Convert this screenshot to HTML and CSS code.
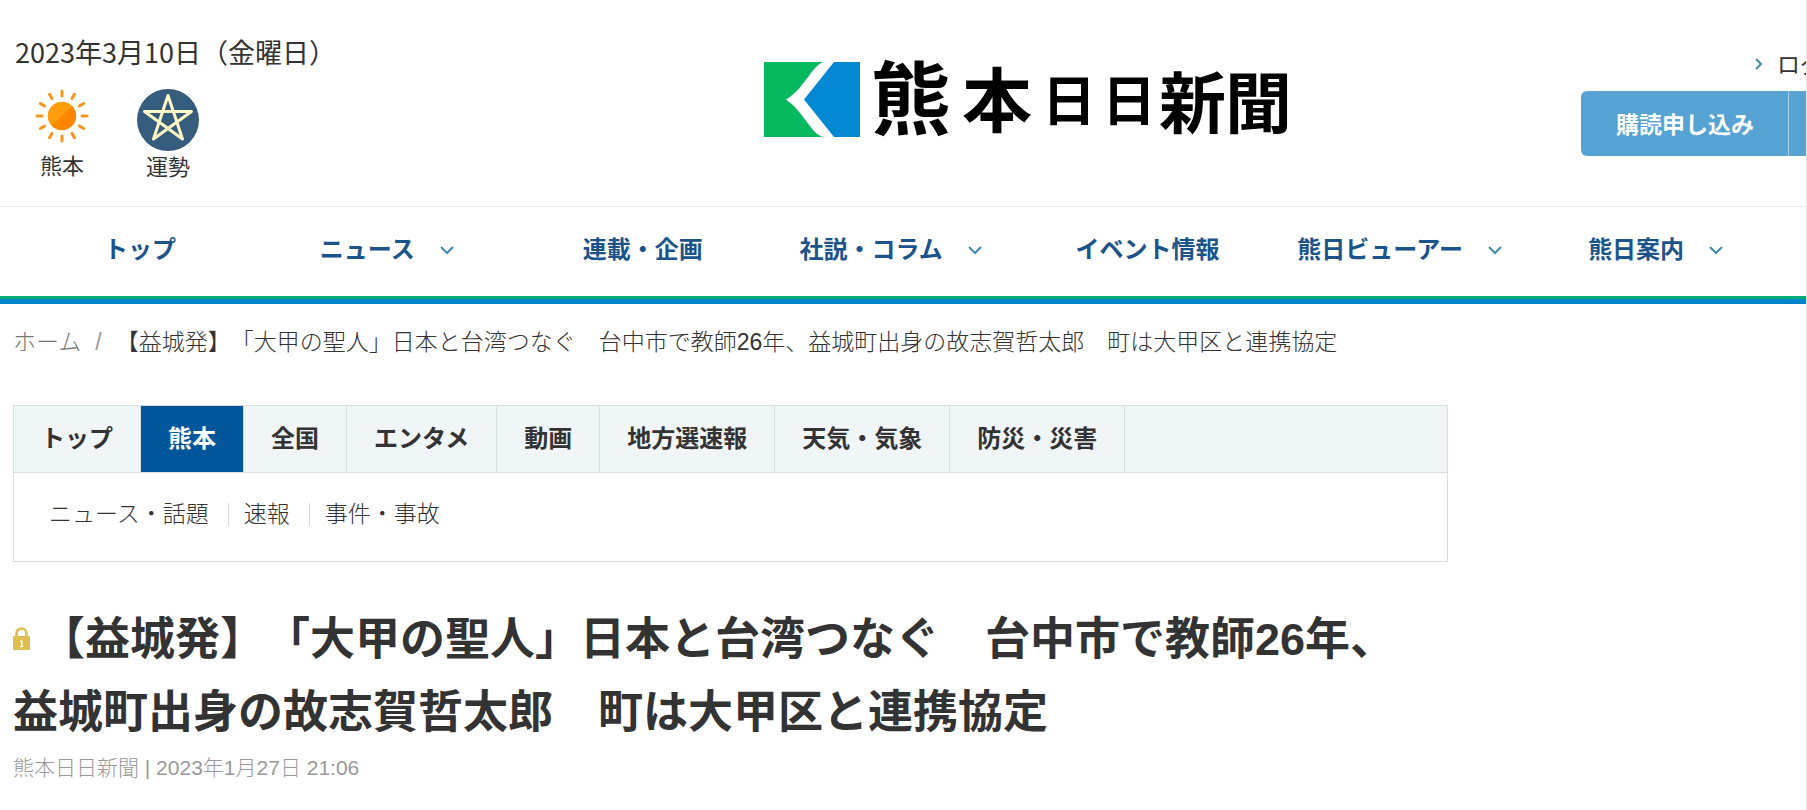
FILE: index.html
```html
<!DOCTYPE html>
<html lang="ja">
<head>
<meta charset="utf-8">
<title>熊本日日新聞</title>
<link rel="stylesheet" href="styles.css">
</head>
<body>
<div class="page">
  <header class="header">
    <div class="today">
      <p class="date">2023年3月10日（金曜日）</p>
      <ul class="shortcuts">
        <li><a class="shortcut" href="#">
          <svg class="sun" viewBox="0 0 54 54" aria-hidden="true">
            <g stroke="#f7941d" stroke-width="3" stroke-linecap="round">
              <path d="M27 2v5M27 47v5M2 27h5M47 27h5M14.500 5.300l2.500 4.300M37 44.400l2.500 4.300M5.300 14.500l4.300 2.500M44.400 37l4.300 2.500M5.300 39.500l4.300-2.500M44.400 17l4.300-2.500M14.500 48.700l2.500-4.300M37 9.600l2.500-4.300"/>
            </g>
            <circle cx="27" cy="27" r="14.300" fill="#ff9d0a"/>
            <path d="M37.100 16.900a14.300 14.300 0 0 1-20.200 20.200z" fill="#ff8400"/>
          </svg>
          <span>熊本</span></a></li>
        <li><a class="shortcut" href="#">
          <svg class="star" viewBox="0 0 62 62" aria-hidden="true">
            <circle cx="31" cy="31" r="31" fill="#355c7d"/>
            <path d="M31 6.500L45.500 50 7.500 22.500h47L16.500 50z" fill="none" stroke="#fdf8c4" stroke-width="3" stroke-linejoin="round"/>
          </svg>
          <span>運勢</span></a></li>
      </ul>
    </div>
    <a class="logo" href="#">
      <svg viewBox="0 0 530 90" role="img" aria-label="熊本日日新聞">
        <path d="M0 8h59C47 13 40 35 22 45.500C40 58 47 80 59 83H0z" fill="#06b95f"/>
        <path d="M70 8h26v75H70L40 45.500z" fill="#0389d3"/>
        <g class="logo-text">
          <text x="107" y="74" font-size="80">熊</text>
          <text x="198" y="73" font-size="70">本</text>
          <text x="278" y="67" font-size="54">日</text>
          <text x="338" y="67" font-size="54">日</text>
          <text x="395" y="74" font-size="67">新</text>
          <text x="461" y="74" font-size="67">聞</text>
        </g>
      </svg>
    </a>
    <div class="account">
      <a class="login" href="#"><svg class="chev-right" viewBox="0 0 8 12" aria-hidden="true"><path d="M1 1l5 5-5 5"/></svg>ログイン</a>
      <div class="buttons">
        <a class="button" href="#">購読申し込み</a>
        <a class="button button-next" href="#" aria-label="会員登録"></a>
      </div>
    </div>
  </header>

  <nav class="nav">
    <a href="#">トップ</a>
    <a href="#">ニュース<svg class="chev" viewBox="0 0 14 9" aria-hidden="true"><path d="M1 1l6 6 6-6"/></svg></a>
    <a href="#">連載・企画</a>
    <a href="#">社説・コラム<svg class="chev" viewBox="0 0 14 9" aria-hidden="true"><path d="M1 1l6 6 6-6"/></svg></a>
    <a href="#">イベント情報</a>
    <a href="#">熊日ビューアー<svg class="chev" viewBox="0 0 14 9" aria-hidden="true"><path d="M1 1l6 6 6-6"/></svg></a>
    <a href="#">熊日案内<svg class="chev" viewBox="0 0 14 9" aria-hidden="true"><path d="M1 1l6 6 6-6"/></svg></a>
  </nav>

  <ol class="breadcrumb">
    <li><a href="#">ホーム</a></li>
    <li class="current">【益城発】「大甲の聖人」日本と台湾つなぐ　台中市で教師26年、益城町出身の故志賀哲太郎　町は大甲区と連携協定</li>
  </ol>

  <main class="main">
    <div class="categories">
      <nav class="tabs">
        <a href="#">トップ</a>
        <a class="active" href="#">熊本</a>
        <a href="#">全国</a>
        <a href="#">エンタメ</a>
        <a href="#">動画</a>
        <a href="#">地方選速報</a>
        <a href="#">天気・気象</a>
        <a href="#">防災・災害</a>
      </nav>
      <nav class="subtabs">
        <a href="#">ニュース・話題</a>
        <a href="#">速報</a>
        <a href="#">事件・事故</a>
      </nav>
    </div>

    <article class="article">
      <h1 class="title"><svg class="lock" viewBox="0 0 17 23" aria-hidden="true"><path d="M3.500 10V6.500a5 5 0 0 1 10 0V10" fill="none" stroke="#dfbd51" stroke-width="2.600"/><rect y="9" width="17" height="14" rx="1" fill="#dfbd51"/><path d="M7 13.500h2.500V19H10.500V20H7V19H8V14.500H7z" fill="#fff"/></svg>【益城発】「大甲の聖人」日本と台湾つなぐ　台中市で教師26年、益城町出身の故志賀哲太郎　町は大甲区と連携協定</h1>
      <p class="meta">熊本日日新聞 | 2023年1月27日 21:06</p>
    </article>
  </main>
</div>
</body>
</html>
```

FILE: styles.css
```css
* {
  box-sizing: border-box;
}

body {
  margin: 0;
  background: #fff;
  color: #333;
  font-family: "Liberation Sans", "Noto Sans CJK JP", sans-serif;
  font-size: 23px;
  text-spacing-trim: space-all;
}

a {
  color: inherit;
  text-decoration: none;
}

p,
ul,
ol,
h1 {
  margin: 0;
  padding: 0;
  list-style: none;
}

svg {
  display: block;
  flex: none;
  overflow: visible;
}

.page {
  min-height: 100vh;
  overflow: hidden;
  border-right: 1px solid #e6e6e6;
}

/* Header */
.header {
  display: grid;
  grid-template-columns: 764fr 530fr 512fr;
  padding: 32px 0 27px;
  border-bottom: 1px solid #e9e9e9;
  font-family: "Noto Sans CJK JP", sans-serif;
}

.date {
  padding-left: 15px;
  font-size: 27px;
  line-height: 40px;
}

.shortcuts {
  display: flex;
  gap: 44px;
  padding: 17px 0 0 31px;
}

.shortcut {
  display: flex;
  flex-direction: column;
  align-items: center;
  width: 62px;
  font-size: 22px;
  line-height: 28px;
}

.sun {
  width: 54px;
  margin-bottom: 7px;
}

.star {
  width: 62px;
}

.logo {
  padding-top: 22px;
}

.logo svg {
  width: 100%;
}

.logo-text {
  fill: #000;
  font-weight: 700;
}

.account {
  justify-self: end;
  width: 225px;
  overflow: hidden;
  white-space: nowrap;
}

.login {
  display: flex;
  align-items: center;
  gap: 14px;
  padding: 16px 0 12px 174px;
  line-height: 31px;
}

.chev-right {
  width: 8px;
}

.chev-right path,
.chev path {
  fill: none;
  stroke: #3f8ba8;
  stroke-width: 2;
}

.buttons {
  display: flex;
}

.button {
  flex: none;
  padding: 0 34px 0 35px;
  border-radius: 6px 0 0 6px;
  background: #56a3d3;
  color: #fff;
  font-weight: 700;
  line-height: 65px;
}

.button-next {
  border-left: 1px solid #a9d0e9;
  border-radius: 0 6px 6px 0;
}

/* Global navigation */
.nav {
  display: grid;
  grid-template-columns: 216fr 263fr 217fr 276fr 222fr 291fr 218fr;
  padding: 0 0 10px 104px;
  border-bottom: 5px solid #0086cd;
  box-shadow: inset 0 -3px #05ad78;
  color: #1b548b;
  font-family: "Noto Sans CJK JP", sans-serif;
  font-size: 24px;
  font-weight: 700;
  line-height: 82px;
}

.nav a {
  display: flex;
  align-items: center;
  gap: 25px;
  white-space: nowrap;
}

.chev {
  width: 14px;
  margin-top: 4px;
}

/* Breadcrumb */
.breadcrumb {
  display: flex;
  padding: 20px 13px 0;
  font-weight: 300;
  line-height: 36px;
}

.breadcrumb a {
  color: #777;
}

.breadcrumb li:first-child::after {
  content: "/";
  padding: 0 14px;
  color: #999;
}

/* Category tabs */
.main {
  width: 81%;
  padding: 45px 15px 0 13px;
}

.categories {
  border: 1px solid #dbdee0;
}

.tabs {
  display: flex;
  border-bottom: 1px solid #dbdee0;
  background: #f0f5f8;
  font-size: 24px;
  font-weight: 700;
  line-height: 66px;
}

.tabs a {
  padding: 0 27px;
  border-right: 1px solid #dbdee0;
}

.tabs .active {
  background: #00569b;
  color: #fff;
}

.subtabs {
  display: flex;
  padding: 30px 35px 35px;
  font-weight: 300;
  line-height: 23px;
}

.subtabs a + a {
  margin-left: 19px;
  padding-left: 15px;
  border-left: 1px solid #d8d8d8;
}

/* Article */
.article {
  padding-right: 24px;
}

.title {
  padding-top: 41px;
  font-size: 45px;
  font-weight: 700;
  line-height: 73px;
}

.lock {
  display: inline-block;
  width: 17px;
  margin-right: 10px;
  vertical-align: 5px;
}

.meta {
  padding-top: 3px;
  color: #999;
  font-size: 21px;
  font-weight: 300;
  line-height: 32px;
}
```
